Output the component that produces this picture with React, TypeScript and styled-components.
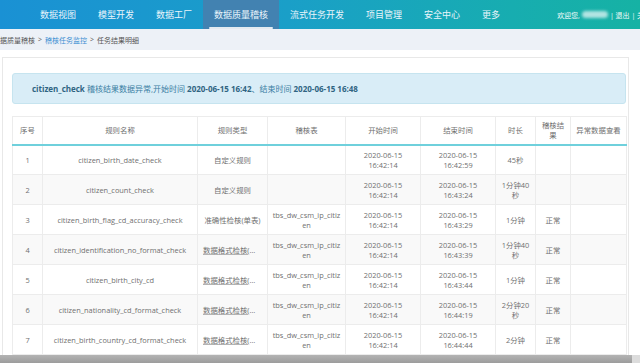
import React from 'react';
import styled, { createGlobalStyle } from 'styled-components';

const GlobalStyle = createGlobalStyle`
	html, body {
		margin: 0;
		padding: 0;
		overflow: hidden;
		background: #fafafa;
		font-family: 'Open Sans', 'Noto Sans CJK SC', sans-serif;
	}
	* {
		box-sizing: border-box;
	}
`;

const Page = styled.div`
	width: 640px;
	height: 363px;
	display: flex;
	flex-direction: column;
	overflow: hidden;
`;

const Header = styled.header`
	height: 29px;
	flex-shrink: 0;
	display: flex;
	align-items: stretch;
	padding-left: 29px;
	background: linear-gradient(90deg, #1a91d4 0%, #1a9fc8 45%, #17adb0 80%, #16b2a4 100%);
	white-space: nowrap;
`;

const NavItem = styled.div<{ $active?: boolean }>`
	position: relative;
	display: flex;
	align-items: center;
	padding: 0 11px;
	font-size: 9px;
	color: #eaf5fb;
	background: ${(p) => (p.$active ? '#4282b1' : 'transparent')};

	&::after {
		content: '';
		display: ${(p) => (p.$active ? 'block' : 'none')};
		position: absolute;
		left: 6px;
		right: 6px;
		bottom: 0;
		height: 2px;
		border-radius: 1px;
		background: #e3ebf1;
	}
`;

const User = styled.div`
	flex-shrink: 0;
	margin-left: 46px;
	display: flex;
	align-items: center;
	gap: 2px;
	font-size: 7px;
	color: #f2fbfa;
`;

const Blurred = styled.span`
	display: inline-block;
	width: 26px;
	height: 7px;
	border-radius: 4px;
	background: rgba(230, 245, 245, 0.75);
	filter: blur(1.5px);
`;

const Crumbs = styled.div`
	height: 21px;
	flex-shrink: 0;
	display: flex;
	align-items: center;
	gap: 3px;
	background: #edf1f7;
	font-size: 7px;
	color: #555;
	white-space: nowrap;
`;

const CrumbFirst = styled.span`
	margin-left: -7px;
`;

const CrumbLink = styled.span`
	color: #3c8fd2;
`;

const Main = styled.div`
	flex: 1;
	display: flex;
	flex-direction: column;
	min-height: 0;
	background: #fff;
	padding-top: 7px;
`;

const Panel = styled.div`
	flex: 1;
	min-height: 0;
	width: 627px;
	margin-left: 2px;
	border: 1px solid #e8e8e8;
	border-bottom: none;
	background: #fff;
	padding: 15px 2px 0 9px;
	overflow: hidden;
`;

const Alert = styled.div`
	height: 31px;
	display: flex;
	align-items: center;
	padding: 0 19px;
	background: #d9edf7;
	border: 1px solid #c6e4ef;
	border-radius: 3px;
	color: #3a7ea3;
	font-size: 8px;
	white-space: nowrap;

	b {
		color: #2f6482;
		font-weight: 700;
	}
`;

const Table = styled.table`
	margin-top: 12px;
	width: 614px;
	table-layout: fixed;
	border-collapse: collapse;
	font-size: 7.4px;
	color: #707070;
`;

const Th = styled.th`
	height: 28px;
	padding: 0 5px;
	font-weight: 400;
	line-height: 10px;
	border: 1px solid #ececec;
	border-bottom: 2px solid #6fd0dc;
	text-align: center;
`;

const Tr = styled.tr<{ $striped?: boolean }>`
	background: ${(p) => (p.$striped ? '#f9f9f9' : '#fff')};
`;

const Td = styled.td<{ $clip?: boolean; $breakAll?: boolean }>`
	height: 30px;
	padding: 0 ${(p) => (p.$breakAll ? 3 : 5)}px;
	line-height: 10px;
	border: 1px solid #ececec;
	text-align: center;
	word-break: ${(p) => (p.$breakAll ? 'break-all' : 'normal')};
	white-space: ${(p) => (p.$clip ? 'nowrap' : 'normal')};
	overflow: hidden;
	text-overflow: ${(p) => (p.$clip ? 'ellipsis' : 'clip')};
`;

const TypeText = styled.span<{ $link?: boolean }>`
	text-decoration: ${(p) => (p.$link ? 'underline' : 'none')};
	text-decoration-color: #b5b5b5;
`;

const ScrollBar = styled.div`
	height: 8px;
	flex-shrink: 0;
	background: #dcdcdc;
	display: flex;
`;

const ScrollThumb = styled.div`
	width: 632px;
	background: linear-gradient(#b3b3b3, #9c9c9c);
`;

const navItems = ['数据视图', '模型开发', '数据工厂', '数据质量稽核', '流式任务开发', '项目管理', '安全中心', '更多'];

const columns = [
	{ title: '序号', width: 30 },
	{ title: '规则名称', width: 155 },
	{ title: '规则类型', width: 70 },
	{ title: '稽核表', width: 78 },
	{ title: '开始时间', width: 75 },
	{ title: '结束时间', width: 75 },
	{ title: '时长', width: 40 },
	{ title: '稽核结果', width: 35 },
	{ title: '异常数据查看', width: 56 },
];

type Row = {
	name: string;
	type: string;
	table: string;
	end: string;
	duration: string;
	result: string;
};

const TABLE = 'tbs_dw_csm_ip_citizen';
const FORMAT = '数据格式检核(单表)';

const rows: Row[] = [
	{ name: 'citizen_birth_date_check', type: '自定义规则', table: '', end: '16:42:59', duration: '45秒', result: '' },
	{ name: 'citizen_count_check', type: '自定义规则', table: '', end: '16:43:24', duration: '1分钟40秒', result: '' },
	{ name: 'citizen_birth_flag_cd_accuracy_check', type: '准确性检核(单表)', table: TABLE, end: '16:43:29', duration: '1分钟', result: '正常' },
	{ name: 'citizen_identification_no_format_check', type: FORMAT, table: TABLE, end: '16:43:39', duration: '1分钟40秒', result: '正常' },
	{ name: 'citizen_birth_city_cd', type: FORMAT, table: TABLE, end: '16:43:44', duration: '1分钟', result: '正常' },
	{ name: 'citizen_nationality_cd_format_check', type: FORMAT, table: TABLE, end: '16:44:19', duration: '2分钟20秒', result: '正常' },
	{ name: 'citizen_birth_country_cd_format_check', type: FORMAT, table: TABLE, end: '16:44:44', duration: '2分钟', result: '正常' },
];

const App: React.FC = () => {
	return (
		<Page>
			<GlobalStyle />
			<Header>
				{navItems.map((item) => (
					<NavItem key={item} $active={item === '数据质量稽核'}>
						{item}
					</NavItem>
				))}
				<User>
					<span>欢迎您,</span>
					<Blurred />
					<span>| 退出 | 关于</span>
				</User>
			</Header>
			<Crumbs>
				<CrumbFirst>数据质量稽核</CrumbFirst>
				<span>&gt;</span>
				<CrumbLink>稽核任务监控</CrumbLink>
				<span>&gt;</span>
				<span>任务结果明细</span>
			</Crumbs>
			<Main>
				<Panel>
					<Alert>
						<b>citizen_check</b>&nbsp;稽核结果数据异常,开始时间&nbsp;<b>2020-06-15 16:42</b>、结束时间&nbsp;
						<b>2020-06-15 16:48</b>
					</Alert>
					<Table>
						<colgroup>
							{columns.map((c) => (
								<col key={c.title} style={{ width: c.width }} />
							))}
						</colgroup>
						<thead>
							<tr>
								{columns.map((c) => (
									<Th key={c.title}>{c.title}</Th>
								))}
							</tr>
						</thead>
						<tbody>
							{rows.map((r, i) => (
								<Tr key={r.name} $striped={i % 2 === 1}>
									<Td>{i + 1}</Td>
									<Td>{r.name}</Td>
									<Td $clip>
										<TypeText $link={r.type === FORMAT}>{r.type}</TypeText>
									</Td>
									<Td $breakAll>{r.table}</Td>
									<Td>2020-06-15 16:42:14</Td>
									<Td>2020-06-15 {r.end}</Td>
									<Td>{r.duration}</Td>
									<Td>{r.result}</Td>
									<Td />
								</Tr>
							))}
						</tbody>
					</Table>
				</Panel>
				<ScrollBar>
					<ScrollThumb />
				</ScrollBar>
			</Main>
		</Page>
	);
};

export default App;
